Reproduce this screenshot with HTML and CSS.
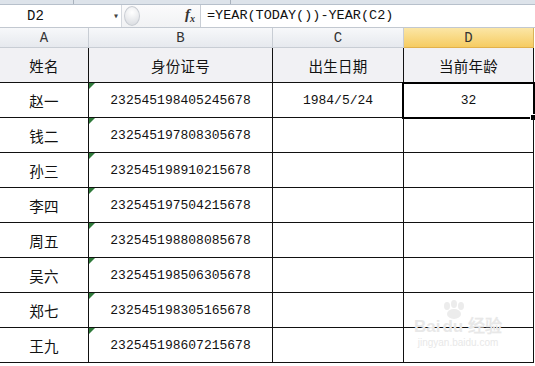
FILE: index.html
```html
<!DOCTYPE html>
<html lang="zh-CN">
<head>
    <meta charset="UTF-8">
    <title>身份证号计算年龄</title>
    <link rel="stylesheet" href="styles.css">
</head>
<body>
<div id="app">
    <div class="ribbon-edge">
        <span class="ribbon-line first"></span>
        <span class="ribbon-line second"></span>
    </div>

    <div class="formula-bar">
        <div class="name-box">
            <span class="cell-ref">D2</span>
            <span class="drop">&#9662;</span>
        </div>
        <div class="splitter"><span class="knob"></span></div>
        <div class="fx"><i>f</i><sub>x</sub></div>
        <div class="formula">=YEAR(TODAY())-YEAR(C2)</div>
    </div>

    <div class="sheet">
        <div class="col-head">A</div>
        <div class="col-head">B</div>
        <div class="col-head">C</div>
        <div class="col-head active">D</div>

        <div class="cell title cn">姓名</div>
        <div class="cell title cn">身份证号</div>
        <div class="cell title cn">出生日期</div>
        <div class="cell title cn">当前年龄</div>

        <div class="cell cn">赵一</div>
        <div class="cell num flag">232545198405245678</div>
        <div class="cell num">1984/5/24</div>
        <div class="cell num selected">32</div>

        <div class="cell cn">钱二</div>
        <div class="cell num flag">232545197808305678</div>
        <div class="cell"></div>
        <div class="cell"></div>

        <div class="cell cn">孙三</div>
        <div class="cell num flag">232545198910215678</div>
        <div class="cell"></div>
        <div class="cell"></div>

        <div class="cell cn">李四</div>
        <div class="cell num flag">232545197504215678</div>
        <div class="cell"></div>
        <div class="cell"></div>

        <div class="cell cn">周五</div>
        <div class="cell num flag">232545198808085678</div>
        <div class="cell"></div>
        <div class="cell"></div>

        <div class="cell cn">吴六</div>
        <div class="cell num flag">232545198506305678</div>
        <div class="cell"></div>
        <div class="cell"></div>

        <div class="cell cn">郑七</div>
        <div class="cell num flag">232545198305165678</div>
        <div class="cell"></div>
        <div class="cell"></div>

        <div class="cell cn">王九</div>
        <div class="cell num flag">232545198607215678</div>
        <div class="cell"></div>
        <div class="cell"></div>
    </div>

    <div class="watermark">
        <svg class="paw" width="30" height="20" viewBox="0 0 30 20">
            <ellipse cx="8" cy="6" rx="3" ry="4" fill="#ececec"/>
            <ellipse cx="15" cy="4" rx="3" ry="4" fill="#ececec"/>
            <ellipse cx="22" cy="6" rx="3" ry="4" fill="#ececec"/>
            <ellipse cx="15" cy="14" rx="7" ry="5" fill="#ececec"/>
        </svg>
        <div class="wm-brand">Bai<span>du</span> 经验</div>
        <div class="wm-url">jingyan.baidu.com</div>
    </div>
</div>
</body>
</html>
```

FILE: styles.css
```css
body {
    margin: 0;
    padding: 0;
    background: #fff;
    overflow: hidden;
}

#app {
    position: relative;
    width: 535px;
    height: 366px;
    overflow: hidden;
}

.ribbon-edge {
    position: relative;
    height: 4px;
    background: #dde3ea;
    border-bottom: 1px solid #b7c0cb;
}

.ribbon-line {
    position: absolute;
    top: 0;
    width: 1px;
    height: 4px;
    background: #a9b2bd;
}

.ribbon-line.first { left: 73px; }
.ribbon-line.second { left: 230px; }

.formula-bar {
    display: flex;
    height: 22px;
    border-bottom: 1px solid #c2c8d0;
    background: #fff;
    font-family: "Liberation Mono", "DejaVu Sans Mono", monospace;
    font-size: 14px;
    color: #111;
}

.name-box {
    width: 121px;
    display: flex;
    align-items: center;
    justify-content: space-between;
    padding-left: 27px;
    padding-right: 2px;
    box-sizing: border-box;
}

.drop {
    font-size: 10px;
    color: #444;
}

.splitter {
    width: 78px;
    display: flex;
    align-items: center;
    background: linear-gradient(#fbfbfc, #f1f2f4);
    border-left: 1px solid #d4d8de;
    border-right: 1px solid #c9ced5;
}

.knob {
    width: 16px;
    height: 20px;
    margin-left: 2px;
    border-radius: 50%;
    border: 1px solid #c9cdd3;
    background: radial-gradient(circle at 50% 30%, #ffffff, #d6d9de);
    box-sizing: border-box;
}

.fx {
    width: 0;
    position: relative;
    font-family: "Liberation Serif", serif;
    font-size: 15px;
    color: #333;
}

.fx i {
    position: absolute;
    left: -16px;
    top: 1px;
    font-weight: bold;
}

.fx sub {
    position: absolute;
    left: -11px;
    top: 8px;
    font-size: 10px;
    font-style: italic;
    font-weight: bold;
}

.formula {
    padding-left: 6px;
    line-height: 22px;
    font-size: 13.5px;
}

.sheet {
    display: grid;
    grid-template-columns: 89px 184px 131px 130px;
    grid-template-rows: 20px 35px;
    grid-auto-rows: 35px;
}

.col-head {
    display: flex;
    align-items: center;
    justify-content: center;
    font-family: "Liberation Mono", "DejaVu Sans Mono", monospace;
    font-size: 14px;
    color: #333;
    background: linear-gradient(#f7f8fa, #e6e9ee);
    border-right: 1px solid #c8cdd4;
    border-bottom: 1px solid #c8cdd4;
    box-sizing: border-box;
}

.col-head.active {
    background: linear-gradient(#fbe6a6, #f6cc62);
    border-right-color: #d8b25a;
    border-bottom-color: #e2b14b;
}

.cell {
    position: relative;
    display: flex;
    align-items: center;
    justify-content: center;
    border-right: 1px solid #111;
    border-bottom: 1px solid #111;
    box-sizing: border-box;
    color: #111;
}

.cell.title {
    background: #f1f1f4;
}

.cn {
    font-family: "Noto Sans CJK SC", sans-serif;
    font-size: 14.5px;
    letter-spacing: 0.3px;
}

.num {
    font-family: "Liberation Mono", "DejaVu Sans Mono", monospace;
    font-size: 13px;
    padding-top: 1px;
}

.cell.flag::before {
    content: "";
    position: absolute;
    left: 0;
    top: 0;
    border-top: 6px solid #2f7a3a;
    border-right: 6px solid transparent;
}

.cell.selected {
    outline: 2px solid #000;
    outline-offset: -1px;
    border-left: 1px solid #111;
    margin-left: -1px;
}

.cell.selected::after {
    content: "";
    position: absolute;
    right: -4px;
    bottom: -4px;
    width: 5px;
    height: 5px;
    background: #000;
    border: 1px solid #fff;
}

.watermark {
    position: absolute;
    left: 403px;
    top: 300px;
    width: 110px;
    text-align: center;
    color: #e8e8e8;
    font-family: "Liberation Sans", sans-serif;
    pointer-events: none;
}

.paw {
    display: block;
    margin: 0 auto -2px 36px;
}

.wm-brand {
    font-size: 17px;
    font-weight: bold;
    line-height: 18px;
}

.wm-brand span {
    margin-left: 2px;
}

.wm-url {
    font-size: 10px;
    line-height: 14px;
}
```
